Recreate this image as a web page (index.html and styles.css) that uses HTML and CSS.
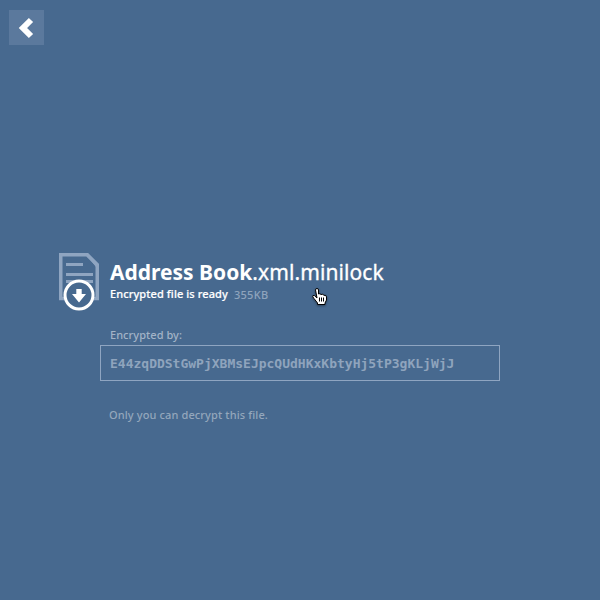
FILE: index.html
```html
<!DOCTYPE html>
<html lang="en">
<head>
<meta charset="utf-8">
<title>miniLock</title>
<link rel="stylesheet" href="styles.css">
</head>
<body>
<button class="back" aria-label="Back">
<svg width="35" height="35" viewBox="0 0 35 35"><path d="M22 10 14 18l8 8" fill="none" stroke="#fff" stroke-width="6"/></svg>
</button>
<main class="file">
<header class="summary">
<svg class="icon" width="42" height="60" viewBox="0 0 42 60">
<path d="M2.750 46.500V2.750H29L39.250 13V46.500z" fill="none" stroke="#8fa5c1" stroke-width="3.500"/>
<path d="M27 1h3l11 11v3h-3z" fill="#8fa5c1"/>
<path d="M8 12.500h17M8 22.500h27M8 29.500h27" stroke="#8fa5c1" stroke-width="3"/>
<circle cx="21" cy="43" r="14" fill="#47698f" stroke="#fff" stroke-width="3"/>
<path d="M18.300 37h5.400v5h4.300L21 50.500 14 42h4.300z" fill="#fff"/>
</svg>
<div class="details">
<h1 class="name"><b class="base">Address Book</b><span class="ext">.xml.minilock</span></h1>
<p class="status"><span class="ready">Encrypted file is ready</span><span class="size">355KB</span></p>
</div>
</header>
<section class="sender">
<h2 class="label">Encrypted by:</h2>
<div class="key">E44zqDDStGwPjXBMsEJpcQUdHKxKbtyHj5tP3gKLjWjJ</div>
</section>
<p class="note">Only you can decrypt this file.</p>
</main>
<svg class="cursor" width="18" height="20" viewBox="0 0 18 20">
<path d="M4.500 3Q4.500 1.500 6 1.500T7.500 3V7q1.500-.8 2.500.5 2-.8 3 .8 2.500-.5 2.500 1.700v3l-1.500 3v1.500H6.500V16L3 11.500Q1 9.500 2 8.500T6 11z" fill="#fff" stroke="#000" stroke-linejoin="round"/>
<path d="M8.500 10.500v4M10.500 10.500v4M12.500 10.500v4" stroke="#000"/>
</svg>
</body>
</html>
```
FILE: styles.css
```css
* {
  box-sizing: border-box;
}

body {
  position: relative;
  height: 600px;
  margin: 0;
  padding: 10px 9px;
  overflow: hidden;
  background: #47698f;
  color: #fff;
  font-family: "Noto Sans", sans-serif;
}

h1, h2, p {
  margin: 0;
}

.back {
  display: block;
  width: 35px;
  height: 35px;
  padding: 0;
  border: 0;
  background: #5b799d;
}

.back svg {
  display: block;
}

.file {
  width: 400px;
  margin: 207px 0 0 91px;
}

.summary {
  display: flex;
  height: 60px;
  margin-left: -42px;
}

.icon {
  flex: none;
}

.details {
  padding: 5px 0 0 10px;
}

.name {
  display: flex;
  font-size: 21px;
  font-weight: 400;
  line-height: 30px;
  white-space: nowrap;
}

.base {
  font-weight: 700;
}

.ext {
  letter-spacing: 0.08px;
  -webkit-text-stroke: 0.3px #fff;
}

.status {
  display: flex;
  gap: 6px;
  font-size: 11px;
  line-height: 14px;
  white-space: nowrap;
}

.ready {
  font-weight: 500;
  letter-spacing: 0.09px;
  -webkit-text-stroke: 0.2px #fff;
}

.size {
  padding-top: 1px;
  color: #8fa4bd;
  font-weight: 500;
  letter-spacing: 0.3px;
}

.label {
  margin: 15px 0 2px 10px;
  color: #a3b4c7;
  font-size: 11px;
  font-weight: 500;
  letter-spacing: 0.05px;
  line-height: 16px;
}

.key {
  height: 36px;
  padding-left: 9px;
  border: 1px solid #8fa5c1;
  color: #8fa4bd;
  font: 700 13px/35px "DejaVu Sans Mono", monospace;
}

.note {
  margin: 26px 0 0 9px;
  color: #94a7bc;
  font-size: 11px;
  font-weight: 500;
  letter-spacing: 0.12px;
  line-height: 16px;
}

.cursor {
  position: absolute;
  top: 287px;
  left: 311px;
  filter: drop-shadow(0 1px 1px rgba(0, 0, 0, 0.4));
}
```
